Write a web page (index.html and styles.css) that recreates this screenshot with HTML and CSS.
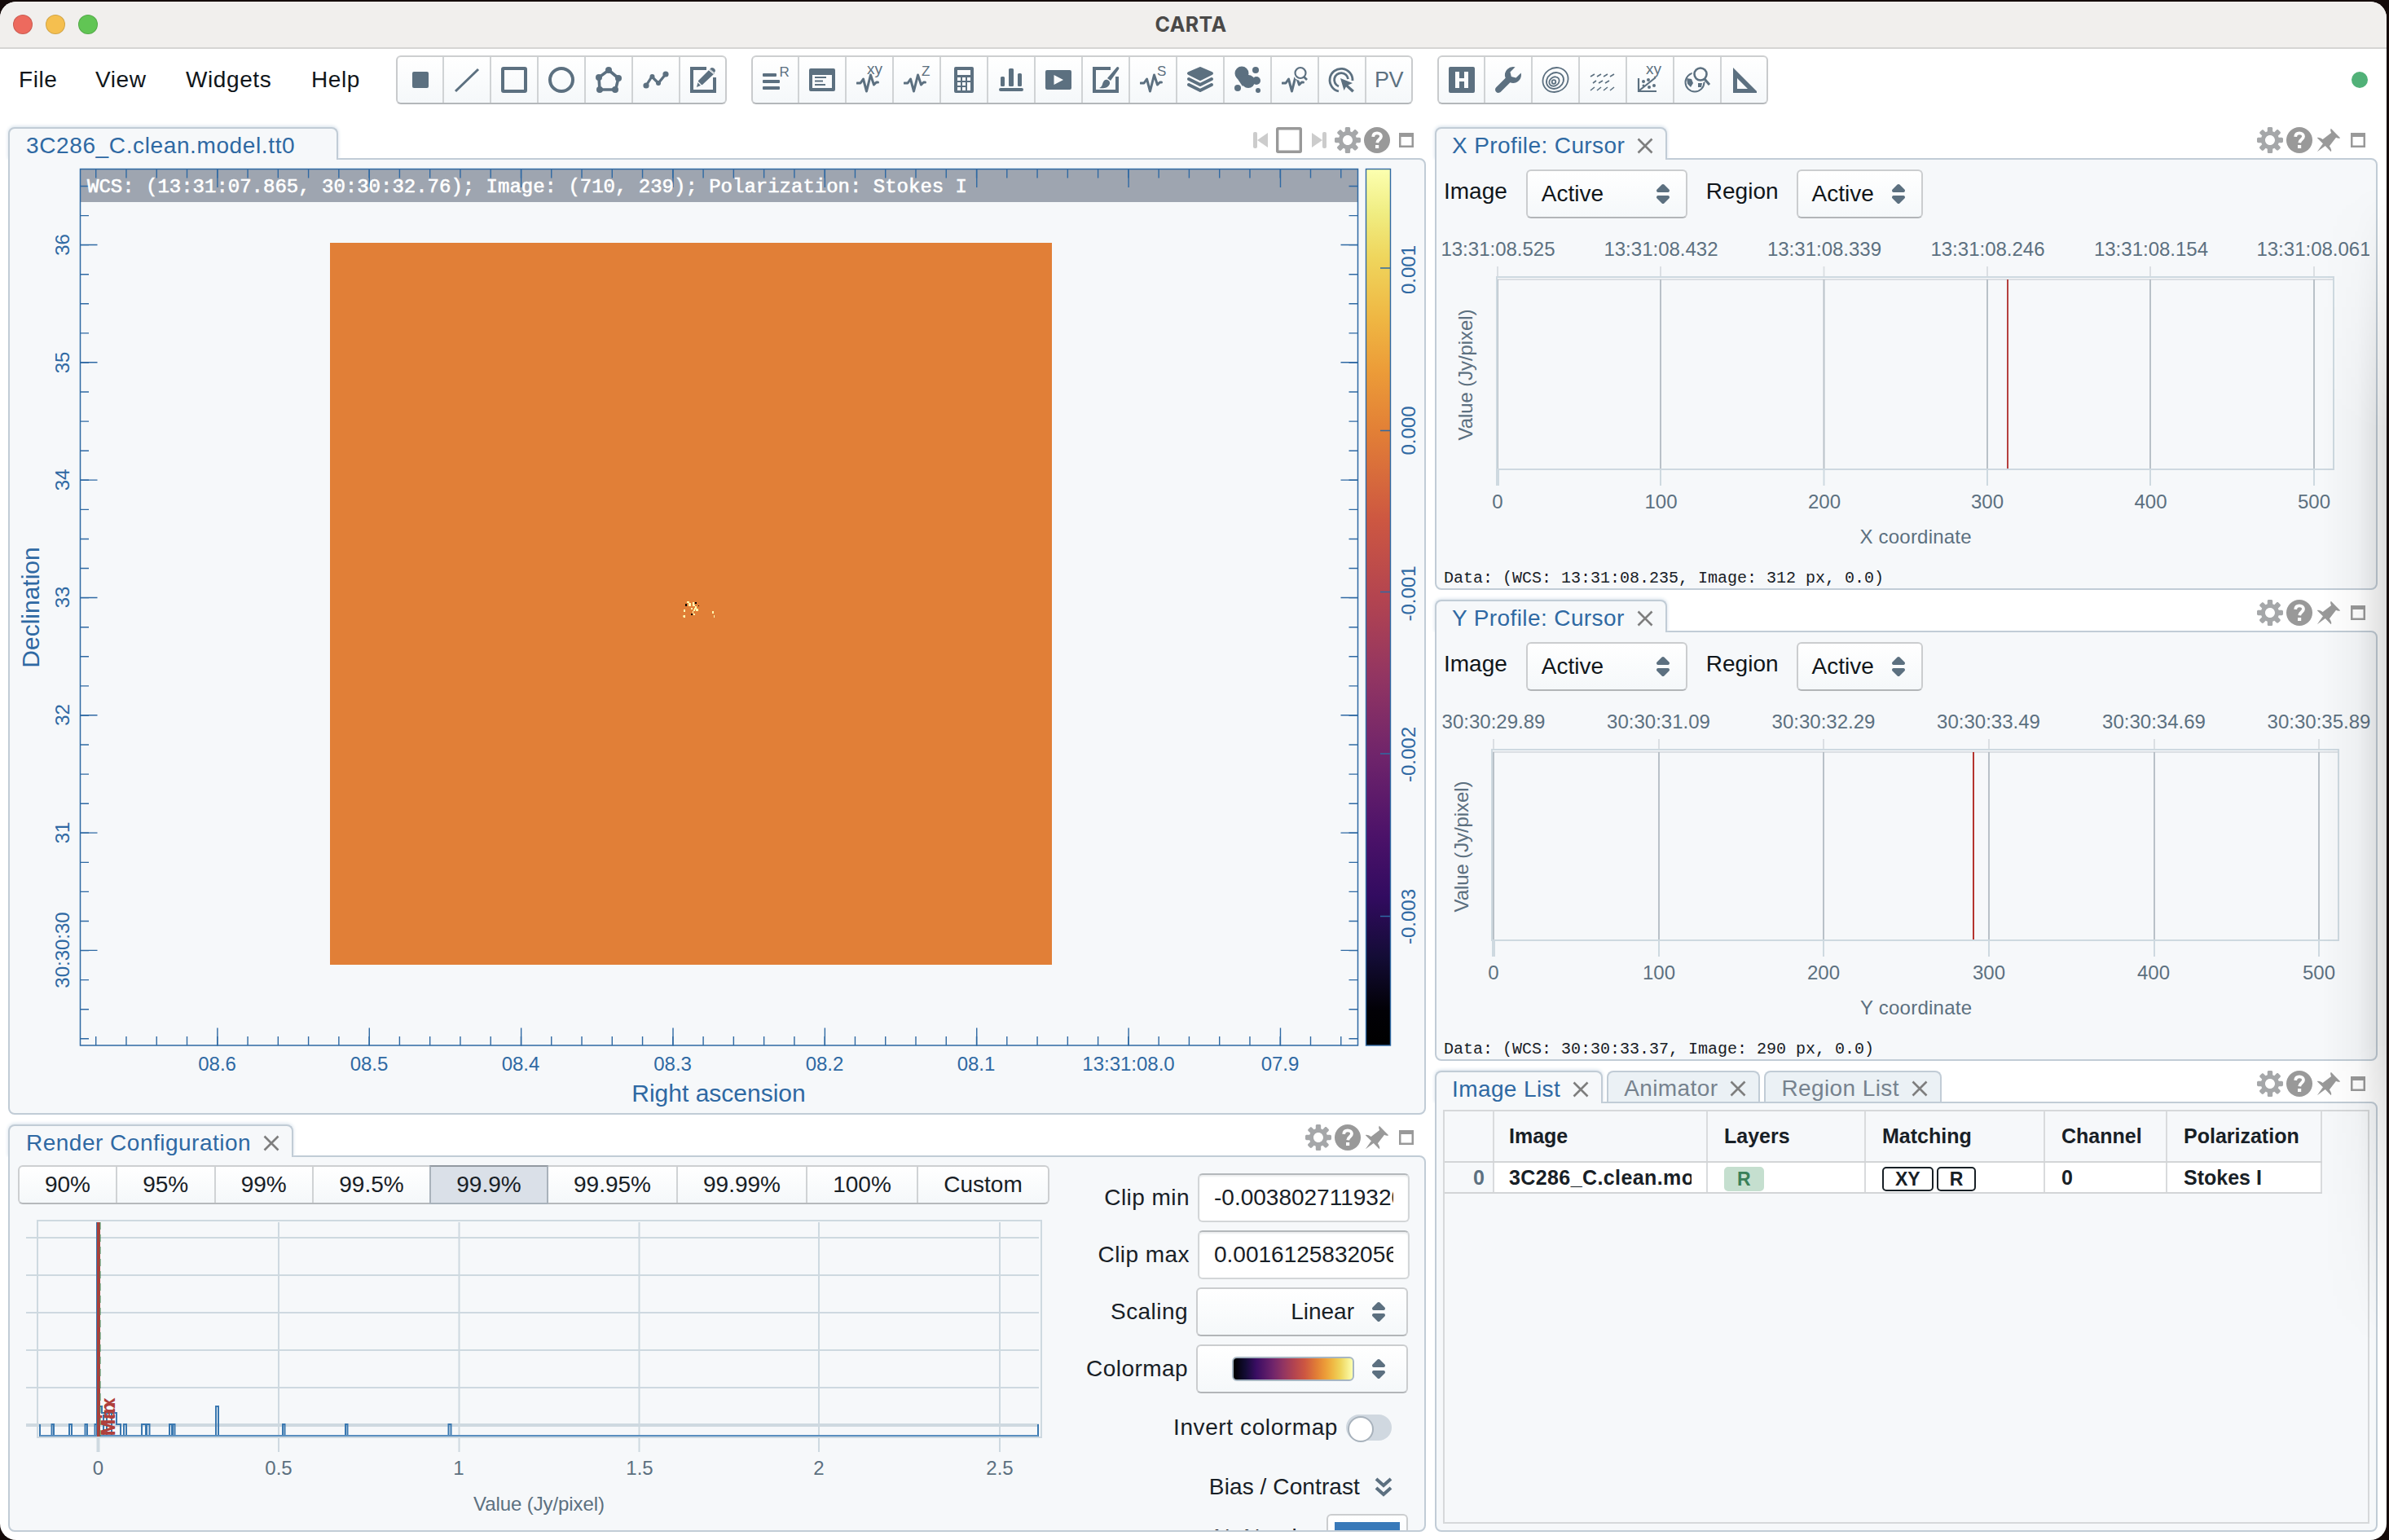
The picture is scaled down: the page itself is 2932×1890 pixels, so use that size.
FILE: index.html
```html
<!DOCTYPE html>
<html lang="en">
<head>
<meta charset="utf-8">
<title>CARTA</title>
<link rel="stylesheet" href="styles.css">
</head>
<body>
<svg class="defs" aria-hidden="true">
  <symbol id="cog" viewBox="0 0 16 16"><path d="M15.19 6.39h-1.85c-.11-.37-.27-.71-.45-1.04l1.36-1.36c.31-.31.31-.82 0-1.13l-1.13-1.13c-.31-.31-.82-.31-1.13 0l-1.36 1.36c-.33-.17-.67-.33-1.04-.44V.79c0-.44-.36-.8-.8-.8h-1.6c-.44 0-.8.36-.8.8v1.86c-.39.12-.75.28-1.1.47l-1.3-1.3c-.3-.3-.79-.3-1.09 0L1.82 2.91c-.3.3-.3.79 0 1.09l1.3 1.3c-.2.34-.36.7-.48 1.09H.79c-.44 0-.8.36-.8.8v1.6c0 .44.36.8.8.8h1.85c.11.37.27.71.45 1.04l-1.36 1.36c-.31.31-.31.82 0 1.13l1.13 1.13c.31.31.82.31 1.13 0l1.36-1.36c.33.18.67.33 1.04.44v1.86c0 .44.36.8.8.8h1.6c.44 0 .8-.36.8-.8v-1.86c.39-.12.75-.28 1.1-.47l1.3 1.3c.3.3.79.3 1.09 0l1.09-1.09c.3-.3.3-.79 0-1.09l-1.3-1.3c.19-.35.36-.71.48-1.1h1.85c.44 0 .8-.36.8-.8v-1.6a.816.816 0 00-.81-.79zm-7.2 4.6c-1.66 0-3-1.34-3-3s1.34-3 3-3 3 1.34 3 3-1.34 3-3 3z"/></symbol>
  <symbol id="help" viewBox="0 0 16 16"><circle cx="8" cy="8" r="8"/><path d="M5.6 5.9C5.7 4.3 6.8 3.7 8 3.7c1.400 0 2.500.8 2.500 2.100C10.500 7.500 8.300 7.500 8.100 9.600" fill="none" stroke="#fff" stroke-width="1.900"/><rect x="7" y="11" width="2.100" height="2" fill="#fff"/></symbol>
  <symbol id="pin" viewBox="0 0 16 16"><path d="M9.410.92c-.51.51-.41 1.500.15 2.560L4.340 7.540C2.800 6.480 1.450 6.050.92 6.580l3.540 3.540-3.540 4.950 4.950-3.540 3.540 3.540c.53-.53.1-1.880-.96-3.420l4.060-5.220c1.060.56 2.040.66 2.550.15L9.410.92z"/></symbol>
  <symbol id="max" viewBox="0 0 18 18"><path d="M0 0h18v18H0zM2.500 5v10.500h13V5z" fill-rule="evenodd"/></symbol>
  <symbol id="caret" viewBox="0 0 16 16"><path d="M5 7h6a1.003 1.003 0 00.71-1.710l-3-3C8.530 2.110 8.280 2 8 2s-.53.11-.71.29l-3 3A1.003 1.003 0 005 7zm6 2H5a1.003 1.003 0 00-.71 1.710l3 3c.18.18.43.29.71.29s.53-.11.71-.29l3-3A1.003 1.003 0 0011 9z"/></symbol>
  <symbol id="close" viewBox="0 0 20 20"><path d="M1.500 1.500l17 17M18.500 1.500l-17 17" stroke="currentColor" stroke-width="2.600" fill="none"/></symbol>
  <symbol id="pulse" viewBox="0 0 32 32"><path d="M1 20h4l3.500-5 4 15 5-20 4 12 3-3h2" fill="none" stroke="currentColor" stroke-width="3" stroke-linejoin="round" stroke-linecap="round"/></symbol>
  <linearGradient id="inferno" x1="0" y1="1" x2="0" y2="0">
    <stop offset="0" stop-color="#000000"/><stop offset=".04" stop-color="#020106"/><stop offset=".1" stop-color="#130c35"/><stop offset=".17" stop-color="#320b60"/><stop offset=".24" stop-color="#4c1269"/><stop offset=".33" stop-color="#6f246b"/><stop offset=".42" stop-color="#923562"/><stop offset=".51" stop-color="#b34450"/><stop offset=".6" stop-color="#cd5741"/><stop offset=".7" stop-color="#e27f36"/><stop offset=".77" stop-color="#ec9c38"/><stop offset=".83" stop-color="#efb743"/><stop offset=".9" stop-color="#efd65d"/><stop offset=".95" stop-color="#f0ed82"/><stop offset="1" stop-color="#fcffb0"/>
  </linearGradient>
</svg>
<div class="window">
  <header class="titlebar">
    <div class="lights"><i class="red"></i><i class="yellow"></i><i class="green"></i></div>
    <div class="title">CARTA</div>
  </header>
  <nav class="toolbar">
    <ul class="menu"><li class="m-file">File</li><li class="m-view">View</li><li class="m-widgets">Widgets</li><li>Help</li></ul>
    <div class="group">
      <button><svg class="ico" viewBox="0 0 32 32"><rect x="6" y="6" width="20" height="20" rx="2"/></svg></button>
      <button><svg class="ico" viewBox="0 0 32 32"><path class="ln" d="M2 30L30 3" stroke-width="3"/></svg></button>
      <button><svg class="ico" viewBox="0 0 32 32"><rect class="ln" x="2" y="2" width="28" height="28" rx="1" stroke-width="4"/></svg></button>
      <button><svg class="ico" viewBox="0 0 32 32"><circle class="ln" cx="16" cy="16" r="14" stroke-width="4"/></svg></button>
      <button><svg class="ico" viewBox="0 0 32 32"><path class="ln" d="M16 4L28 14 24.500 28H5L4 13z" stroke-width="3.600"/><circle cx="16" cy="4" r="4"/><circle cx="28" cy="14" r="4"/><circle cx="24" cy="28" r="4"/><circle cx="5" cy="28" r="4"/><circle cx="4" cy="13" r="4"/></svg></button>
      <button><svg class="ico" viewBox="0 0 32 32"><path class="ln" d="M4 23L11 12 19 20 28 9" stroke-width="3.200"/><circle cx="4" cy="23" r="3.600"/><circle cx="11.500" cy="12" r="3"/><circle cx="19" cy="20" r="3"/><circle cx="28" cy="9" r="3.600"/></svg></button>
      <button><svg class="ico" viewBox="0 0 32 32"><path class="ln" d="M20 2H2V30H30V13" stroke-width="4"/><path d="M8 25l2-8L24 3l6 5L15 22zM25.500 1.500c2-2 7 2 5 4.500l-.8 1-5.400-4.500z"/><path d="M9 18l5 5M23 3.500l6 5" stroke="#fafbfc" stroke-width="1.400"/></svg></button>
    </div>
    <div class="group">
      <button><svg class="ico" viewBox="0 0 32 32"><rect x="0" y="8" width="17" height="4" rx="1"/><rect x="0" y="16" width="21" height="4" rx="1"/><rect x="0" y="24" width="21" height="4" rx="1"/><text x="20.500" y="12" font-size="17">R</text></svg></button>
      <button><svg class="ico" viewBox="0 0 32 32"><path d="M2 2h28a2 2 0 012 2v24a2 2 0 01-2 2H2a2 2 0 01-2-2V4a2 2 0 012-2zM4 10v16h24V10z" fill-rule="evenodd"/><path class="ln" d="M7 13h14M7 17.500h10M7 22h13" stroke-width="2.200"/></svg></button>
      <button><svg class="ico" viewBox="0 0 32 32"><use href="#pulse"/><text x="13" y="9" font-size="19" textLength="19">xy</text></svg></button>
      <button><svg class="ico" viewBox="0 0 32 32"><use href="#pulse"/><text x="22" y="11" font-size="17">Z</text></svg></button>
      <button><svg class="ico" viewBox="0 0 32 32"><path d="M6 0h20a2 2 0 012 2v28a2 2 0 01-2 2H6a2 2 0 01-2-2V2a2 2 0 012-2zM8 4v6h16V4zM8 13v4h4v-4zM14 13v4h4v-4zM20 13v4h4v-4zM8 19v4h4v-4zM14 19v4h4v-4zM8 25v4h4v-4zM14 25v4h4v-4zM20 19v10h4V19z" fill-rule="evenodd"/></svg></button>
      <button><svg class="ico" viewBox="0 0 32 32"><rect x="1" y="26" width="30" height="4" rx="2"/><rect x="3" y="12" width="5" height="12" rx="1.500"/><rect x="13" y="2" width="6" height="22" rx="1.500"/><rect x="24" y="8" width="5" height="16" rx="1.500"/></svg></button>
      <button><svg class="ico" viewBox="0 0 32 32"><path d="M2 4h28a2 2 0 012 2v20a2 2 0 01-2 2H2a2 2 0 01-2-2V6a2 2 0 012-2zM10.500 10v12L22 16z" fill-rule="evenodd"/></svg></button>
      <button><svg class="ico" viewBox="0 0 32 32"><path class="ln" d="M22 2H2V30H30V12" stroke-width="4"/><path d="M8 26c5-2 3-5 6-9 3-3 8 0 7 4-2 5-8 6-13 5zM18 14L30 0c2 0 3 1 2 3L22 17z"/></svg></button>
      <button><svg class="ico" viewBox="0 0 32 32"><use href="#pulse"/><text x="21" y="11" font-size="17">S</text></svg></button>
      <button><svg class="ico" viewBox="0 0 16 16"><path d="M.55 4.890l7 3.500c.14.07.29.11.45.11s.31-.04.45-.11l7-3.500a.998.998 0 00-.06-1.810L8.400.08a1.006 1.006 0 00-.79 0l-6.990 3a.992.992 0 00-.07 1.810zM15 10c-.16 0-.31.04-.45.11L8 13.380 1.450 10.100c-.14-.06-.29-.1-.45-.1-.55 0-1 .45-1 1 0 .39.23.73.55.89l7 3.500c.14.07.29.11.45.11s.31-.04.45-.11l7-3.500c.32-.16.55-.5.55-.89 0-.55-.45-1-1-1zm0-3.500c-.16 0-.31.04-.45.11L8 9.880 1.450 6.610A.997.997 0 001 6.500c-.55 0-1 .45-1 1 0 .39.23.73.55.89l7 3.500c.14.07.29.11.45.11s.31-.04.45-.11l7-3.500c.32-.16.55-.5.55-.89 0-.55-.45-1-1-1z"/></svg></button>
      <button><svg class="ico" viewBox="0 0 32 32"><circle cx="9" cy="8" r="8.500"/><circle cx="17" cy="18" r="8"/><circle cx="26" cy="4" r="4"/><circle cx="27" cy="17" r="5"/><circle cx="4" cy="26" r="4"/><circle cx="29" cy="29" r="3"/><path d="M2 12l8 12 8-14z"/></svg></button>
      <button><svg class="ico" viewBox="0 0 32 32"><use href="#pulse"/><circle cx="23" cy="8" r="9" fill="#fcfcfd"/><circle class="ln" cx="23" cy="7.500" r="6.500" stroke-width="2.200"/><path class="ln" d="M27 12l4 4" stroke-width="2.600"/></svg></button>
      <button><svg class="ico" viewBox="0 0 32 32"><path class="ln" d="M12 30A14 14 0 1129 17" stroke-width="2.800"/><path class="ln" d="M12 24A8.500 8.500 0 1123.500 15" stroke-width="2.800"/><path d="M14 14l15 6-5.500 2.500L31 29l-2.500 2.500L21 24.500 18.500 29z"/></svg></button>
      <button class="pv">PV</button>
    </div>
    <div class="group">
      <button><svg class="ico" viewBox="0 0 32 32"><path d="M2 0h28a2 2 0 012 2v28a2 2 0 01-2 2H2a2 2 0 01-2-2V2a2 2 0 012-2zM8 6v20h5v-8h6v8h5V6h-5v8h-6V6z" fill-rule="evenodd"/></svg></button>
      <button><svg class="ico" viewBox="0 0 16 16"><path d="M15.830 3.700l-3.060 3.050-2.840-.7-.7-2.830L12.290.17a5.004 5.004 0 00-4.830 1.290 4.967 4.967 0 00-1.120 5.360L.58 12.580c-.36.36-.58.86-.58 1.410 0 1.100.9 2 2 2 .55 0 1.050-.22 1.410-.59l5.770-5.770c1.790.69 3.910.35 5.350-1.120 1.320-1.300 1.740-3.150 1.300-4.810z"/></svg></button>
      <button><svg class="ico" viewBox="0 0 32 32"><g class="ln" stroke-width="1.800"><ellipse cx="16" cy="16" rx="16" ry="14.500" transform="rotate(-35 16 16)"/><ellipse cx="15.500" cy="17" rx="11" ry="9.500" transform="rotate(-35 15.500 17)"/><ellipse cx="14.500" cy="18" rx="6.500" ry="5.300" transform="rotate(-35 14.500 18)"/><circle cx="14" cy="18.500" r="2.300"/></g></svg></button>
      <button><svg class="ico" viewBox="0 0 32 32"><path class="ln" d="M1 12l5-3M9 12l5-3M17 12l5-3M25 12l5-3M4 20l4-3M11 20l5-3M19 20l5-3M1 29l5-4M9 29l5-4M17 29l5-4M25 29l5-4" stroke-width="1.600"/></svg></button>
      <button><svg class="ico" viewBox="0 0 32 32"><path class="ln" d="M2 14v16h22M3 29l20-16" stroke-width="2.200"/><circle cx="8" cy="18" r="2"/><circle cx="14" cy="16" r="2"/><circle cx="15" cy="25" r="2"/><circle cx="21" cy="23" r="2"/><circle cx="8" cy="23" r="1.500"/><text x="11" y="9" font-size="19" textLength="19">xy</text></svg></button>
      <button><svg class="ico" viewBox="0 0 32 32"><circle class="ln" cx="13" cy="19" r="11.500" stroke-width="2"/><path d="M3 14l6 1 2 5-3 5-4-4zM17 20l5 0-1 5-4 0z"/><circle cx="20" cy="9" r="10.500" fill="#fbfcfc"/><circle class="ln" cx="20" cy="9" r="7.500" stroke-width="2.600"/><path class="ln" d="M25 15l6 7" stroke-width="3"/></svg></button>
      <button><svg class="ico" viewBox="0 0 32 32"><path d="M2 1L31 30v2H2zM7 14v13h13z" fill-rule="evenodd"/></svg></button>
    </div>
    <span class="status"></span>
  </nav>

  <main class="columns">
    <div class="col left">
      <section class="panel p-image">
        <div class="head">
          <div class="tab active wide">3C286_C.clean.model.tt0</div>
          <div class="tools">
            <svg class="step" viewBox="0 0 18 20"><rect width="5" height="20" rx="2"/><path d="M18 1v18L5 10z"/></svg>
            <svg class="frame" viewBox="0 0 32 32"><rect x="1.700" y="1.700" width="28.600" height="28.600" rx="1"/></svg>
            <svg class="step next" viewBox="0 0 18 20"><rect x="13" width="5" height="20" rx="2"/><path d="M0 1v18l13-9z"/></svg>
            <svg class="t cog"><use href="#cog"/></svg><svg class="t"><use href="#help"/></svg><svg class="mx"><use href="#max"/></svg>
          </div>
        </div>
        <div class="body">
          <svg class="chart" width="1736" height="1170" viewBox="12 196 1736 1170">
            <rect x="405" y="298" width="886" height="886" fill="#e17f37"/>
            <path fill="#fffbb0" d="M843 738h3v2h-3zM845 740h3v4h-3zM850 739h2v3h1v2h-3zM839 748h2v3h-2zM848 746h2v2h-2zM853 744h2v3h2v3h-3v-2h-2v-2h1zM851 748h2v2h-2zM850 750h1v3h-1zM851 753h2v2h-2zM839 755h2v3h-2l-1-2zM874 750h2v3h-2zM876 755h1v3h-1z"/>
            <path fill="#000" d="M841 741h2v3h-2zM853 739h2v2h-2zM857 743h1v1h-1zM848 753h2v2h-2z"/>
            <rect x="98" y="208" width="1568" height="40" fill="#9ea5b0"/>
            <g class="axis">
              <rect x="98.500" y="207.500" width="1568" height="1075.500"/>
              <path d="M117 213H1666M117 1277.500H1666" stroke-width="11" stroke-dasharray="1.400 35.870"/>
              <path d="M266.200 219H1666M266.200 1272.500H1666" stroke-width="22" stroke-dasharray="1.400 184.970"/>
              <path d="M103.500 227.800V1283M1661 227.800V1283" stroke-width="11" stroke-dasharray="1.400 34.680"/>
              <path d="M109 299.800V1283M1656 299.800V1283" stroke-width="21" stroke-dasharray="1.400 142.920"/>
            </g>
            <text class="wcs" x="107" y="236" textLength="1080">WCS: (13:31:07.865, 30:30:32.76); Image: (710, 239); Polarization: Stokes I</text>
            <rect x="1676.500" y="207.500" width="30" height="1075.500" fill="url(#inferno)" stroke="#2f69a3" stroke-width="1.400"/>
            <path d="M1694 329h13M1694 528.500h13M1694 726.500h13M1694 925h13M1694 1124.500h13" stroke="#2f69a3" stroke-width="1.300"/>
            <g class="lab blue">
              <text x="266.600" y="1314">08.6</text><text x="453" y="1314">08.5</text><text x="639" y="1314">08.4</text><text x="825.600" y="1314">08.3</text><text x="1012" y="1314">08.2</text><text x="1198" y="1314">08.1</text><text x="1385" y="1314">13:31:08.0</text><text x="1571" y="1314">07.9</text>
              <text transform="translate(84.500 300.500) rotate(-90)">36</text><text transform="translate(84.500 445) rotate(-90)">35</text><text transform="translate(84.500 589) rotate(-90)">34</text><text transform="translate(84.500 733) rotate(-90)">33</text><text transform="translate(84.500 877.500) rotate(-90)">32</text><text transform="translate(84.500 1022) rotate(-90)">31</text><text transform="translate(84.500 1166) rotate(-90)">30:30:30</text>
              <text transform="translate(1736.500 331) rotate(-90)">0.001</text><text transform="translate(1736.500 528.500) rotate(-90)">0.000</text><text transform="translate(1736.500 728.500) rotate(-90)">-0.001</text><text transform="translate(1736.500 926) rotate(-90)">-0.002</text><text transform="translate(1736.500 1125) rotate(-90)">-0.003</text>
              <text class="big" x="882" y="1352">Right ascension</text>
              <text class="big" transform="translate(48 745.500) rotate(-90)">Declination</text>
            </g>
          </svg>
        </div>
      </section>

      <section class="panel p-render">
        <div class="head">
          <div class="tab active">Render Configuration<svg class="x"><use href="#close"/></svg></div>
          <div class="tools"><svg class="t cog"><use href="#cog"/></svg><svg class="t"><use href="#help"/></svg><svg class="t"><use href="#pin"/></svg><svg class="mx"><use href="#max"/></svg></div>
        </div>
        <div class="body render">
          <div class="hist">
            <div class="pct"><b class="w119">90%</b><b class="w121">95%</b><b class="w121">99%</b><b class="w144">99.5%</b><b class="w144 on">99.9%</b><b class="w159">99.95%</b><b class="w159">99.99%</b><b class="w136">100%</b><b class="w161">Custom</b></div>
            <svg class="chart" width="1290" height="400" viewBox="12 1478 1290 400">
              <g fill="none" stroke="#ced9e0" stroke-width="2">
                <path d="M46 1498H1278V1764H46zM32 1519H1275M32 1565H1275M32 1611H1275M32 1657H1275M32 1703H1275"/>
                <path d="M342 1500V1782M563.500 1500V1782M784.500 1500V1782M1005 1500V1782M1227 1500V1782"/>
                <path d="M32 1749H1275M120.500 1764V1782" stroke-width="4"/>
              </g>
              <path fill="none" stroke="#3a78b0" stroke-width="2" d="M49 1748V1762H63.500V1748H66V1762H85V1748H88V1762H104.500V1748H107V1762H116.500V1748H119V1500V1762M122 1762V1726H125V1734H143V1748H148V1762H152V1748H155V1762H174V1748H179V1762H180V1748H183.500V1762H208V1748H211V1762H212V1748H214.500V1762H265V1726H268V1762H347V1748H349.500V1762H424V1748H426.500V1762H550.500V1748H553.500V1762H1274V1748M127 1762V1736M131 1734V1762M137 1762V1734"/>
              <path d="M49 1762H1274" stroke="#5a8fbf" stroke-width="2" fill="none"/>
              <path d="M121 1500V1763" stroke="#a9403a" stroke-width="4"/>
              <path d="M123 1500V1763" stroke="#3d8a55" stroke-width="1" stroke-dasharray="9 6"/>
              <g class="mark"><text transform="translate(141 1762) rotate(-90)">Min</text><text transform="translate(141 1762) rotate(-90)">Max</text></g>
              <g class="lab">
                <text x="120.500" y="1809.500">0</text><text x="342" y="1809.500">0.5</text><text x="563" y="1809.500">1</text><text x="785" y="1809.500">1.5</text><text x="1005" y="1809.500">2</text><text x="1227" y="1809.500">2.5</text>
                <text x="661.500" y="1853.500" textLength="161">Value (Jy/pixel)</text>
              </g>
            </svg>
          </div>
          <div class="controls">
            <div class="row"><label>Clip min</label><div class="input"><span>-0.003802711932003</span></div></div>
            <div class="row"><label>Clip max</label><div class="input"><span>0.001612583205600</span></div></div>
            <div class="row sel"><label>Scaling</label><div class="select wide">Linear<svg><use href="#caret"/></svg></div></div>
            <div class="row sel"><label>Colormap</label><div class="select wide"><i class="ramp"></i><svg><use href="#caret"/></svg></div></div>
            <div class="row invert"><label>Invert colormap</label><span class="switch"></span></div>
            <div class="row bias"><label>Bias / Contrast</label><svg viewBox="0 0 22 24"><path d="M2 2l9 8 9-8M2 13l9 8 9-8" fill="none" stroke="#5c7080" stroke-width="4"/></svg></div>
            <div class="row sel nan"><label>NaN color</label><div class="select swatch"><i></i></div></div>
          </div>
        </div>
      </section>
    </div>

    <div class="col right">
      <section class="panel p-x">
        <div class="head">
          <div class="tab active">X Profile: Cursor<svg class="x"><use href="#close"/></svg></div>
          <div class="tools"><svg class="t cog"><use href="#cog"/></svg><svg class="t"><use href="#help"/></svg><svg class="t"><use href="#pin"/></svg><svg class="mx"><use href="#max"/></svg></div>
        </div>
        <div class="body">
          <div class="pick"><label>Image</label><div class="select s1">Active<svg><use href="#caret"/></svg></div><label>Region</label><div class="select s2">Active<svg><use href="#caret"/></svg></div></div>
          <svg class="chart" width="1145" height="454" viewBox="1763 268 1145 454">
            <path d="M1838 327V340M2038 327V340M2238.500 327V340M2439 327V340M2639 327V340M2840 327V340M1837 343H2864" stroke="#dbdfe3" stroke-width="2"/>
            <path d="M1838 343V575M2038 343V575M2238.500 343V575M2439 343V575M2639 343V575M2840 343V575" stroke="#b9c1c8" stroke-width="2"/>
            <path d="M1837 340H2864V576H1837zM2038 577V596M2238.500 577V596M2439 577V596M2639 577V596M2840 577V596" stroke="#ced9e0" stroke-width="2" fill="none"/>
            <path d="M1838 576V596" stroke="#ced9e0" stroke-width="4"/>
            <path d="M2464 343V575" stroke="#b5403f" stroke-width="2"/>
            <g class="lab">
              <text x="1838.500" y="314">13:31:08.525</text><text x="2038.500" y="314">13:31:08.432</text><text x="2239" y="314">13:31:08.339</text><text x="2439.500" y="314">13:31:08.246</text><text x="2640" y="314">13:31:08.154</text><text x="2839.500" y="314">13:31:08.061</text>
              <text x="1838" y="624">0</text><text x="2038.500" y="624">100</text><text x="2239" y="624">200</text><text x="2439" y="624">300</text><text x="2639.500" y="624">400</text><text x="2840" y="624">500</text>
              <text x="2351" y="667" textLength="137">X coordinate</text>
              <text transform="translate(1807 460) rotate(-90)" textLength="161">Value (Jy/pixel)</text>
            </g>
            <text class="data" x="1772" y="715" textLength="540">Data: (WCS: 13:31:08.235, Image: 312 px, 0.0)</text>
          </svg>
        </div>
      </section>

      <section class="panel p-y">
        <div class="head">
          <div class="tab active">Y Profile: Cursor<svg class="x"><use href="#close"/></svg></div>
          <div class="tools"><svg class="t cog"><use href="#cog"/></svg><svg class="t"><use href="#help"/></svg><svg class="t"><use href="#pin"/></svg><svg class="mx"><use href="#max"/></svg></div>
        </div>
        <div class="body">
          <div class="pick"><label>Image</label><div class="select s1">Active<svg><use href="#caret"/></svg></div><label>Region</label><div class="select s2">Active<svg><use href="#caret"/></svg></div></div>
          <svg class="chart" width="1147" height="452" viewBox="1763 848 1147 452">
            <path d="M1833 907V920M2036 907V920M2238 907V920M2441 907V920M2644 907V920M2846 907V920M1831 923H2871" stroke="#dbdfe3" stroke-width="2"/>
            <path d="M1833 923V1153M2036 923V1153M2238 923V1153M2441 923V1153M2644 923V1153M2846 923V1153" stroke="#b9c1c8" stroke-width="2"/>
            <path d="M1831 920H2870V1154H1831zM2036 1155V1174M2238 1155V1174M2441 1155V1174M2644 1155V1174M2846 1155V1174" stroke="#ced9e0" stroke-width="2" fill="none"/>
            <path d="M1833 1154V1174" stroke="#ced9e0" stroke-width="4"/>
            <path d="M2422 923V1153" stroke="#b5352f" stroke-width="2"/>
            <g class="lab">
              <text x="1833" y="894">30:30:29.89</text><text x="2035.500" y="894">30:30:31.09</text><text x="2238" y="894">30:30:32.29</text><text x="2440.500" y="894">30:30:33.49</text><text x="2643.500" y="894">30:30:34.69</text><text x="2846" y="894">30:30:35.89</text>
              <text x="1833" y="1202">0</text><text x="2036" y="1202">100</text><text x="2238" y="1202">200</text><text x="2441" y="1202">300</text><text x="2643" y="1202">400</text><text x="2846" y="1202">500</text>
              <text x="2351.500" y="1245" textLength="137">Y coordinate</text>
              <text transform="translate(1802 1039) rotate(-90)" textLength="161">Value (Jy/pixel)</text>
            </g>
            <text class="data" x="1772" y="1293" textLength="528">Data: (WCS: 30:30:33.37, Image: 290 px, 0.0)</text>
          </svg>
        </div>
      </section>

      <section class="panel p-list">
        <div class="head">
          <div class="tab active">Image List<svg class="x"><use href="#close"/></svg></div>
          <div class="tab">Animator<svg class="x"><use href="#close"/></svg></div>
          <div class="tab">Region List<svg class="x"><use href="#close"/></svg></div>
          <div class="tools"><svg class="t cog"><use href="#cog"/></svg><svg class="t"><use href="#help"/></svg><svg class="t"><use href="#pin"/></svg><svg class="mx"><use href="#max"/></svg></div>
        </div>
        <div class="body listbody">
          <div class="grid">
            <div class="tr th"><span></span><span>Image</span><span>Layers</span><span>Matching</span><span>Channel</span><span>Polarization</span></div>
            <div class="tr td"><span class="idx">0</span><span><em>3C286_C.clean.model.tt0</em></span><span><i class="tag g">R</i></span><span><i class="tag">XY</i><i class="tag">R</i></span><span>0</span><span>Stokes I</span></div>
          </div>
        </div>
      </section>
    </div>
  </main>
  <div class="edge"></div>
</div>
</body>
</html>
```
FILE: styles.css
```css
* { box-sizing: border-box; }
body { margin: 0; width: 2932px; height: 1890px; overflow: hidden; padding-top: 2px; background: #150b0a; font-family: "Liberation Sans", Arial, sans-serif; font-size: 28px; color: #182026; }
.defs { position: absolute; width: 0; height: 0; }
.window { position: relative; width: 2929px; height: 1888px; background: #fff; border-radius: 20px; overflow: hidden; }
svg { display: block; fill: currentColor; flex: none; }

.titlebar { height: 58px; background: #f1efed; border-bottom: 2px solid #d6d5d3; display: grid; grid-template-columns: 200px 1fr 206px; align-items: center; }
.lights { display: flex; gap: 16px; padding-left: 16px; }
.lights i { width: 24px; height: 24px; border-radius: 50%; border: 1px solid rgba(0,0,0,.14); }
.red { background: #ed6a5e; }
.yellow { background: #f5bf4f; }
.green { background: #61c554; }
.title { text-align: center; font: 700 25px/53px Inter, sans-serif; letter-spacing: .4px; color: #4a4948; }

.toolbar { height: 96px; padding-top: 8px; display: flex; align-items: flex-start; position: relative; }
.menu { list-style: none; margin: 0; padding: 0 0 0 23px; width: 486px; display: flex; line-height: 60px; letter-spacing: .6px; color: #10161a; }
.m-file { width: 94px; } .m-view { width: 111px; } .m-widgets { width: 154px; }
.group { display: flex; margin-right: 30px; height: 60px; border-radius: 6px; border: 2px solid #c9cbcd; border-bottom-color: #b4b7ba; border-top-color: #cdcfd0; background: linear-gradient(#fff, #f5f8fa); }
.group button { appearance: none; border: 0; border-right: 2px solid #d0d3d5; background: none; width: 58px; padding: 0; display: grid; place-items: center; color: #5c7080; font: 28px "Liberation Sans", sans-serif; }
.group button:first-child { width: 57px; }
.group button:last-child { border: 0; width: 55px; }
.ico { width: 32px; height: 32px; overflow: visible; font-family: "Liberation Sans", sans-serif; }
.ln { fill: none; stroke: currentColor; }
.group .pv { font-size: 27px; letter-spacing: -.5px; }
.status { width: 20px; height: 20px; border-radius: 50%; background: #51b178; margin: 20px 23px 0 auto; }

.columns { display: flex; gap: 11px; padding-left: 10px; }
.col { display: flex; flex-direction: column; gap: 12px; }
.left { width: 1740px; }
.right { width: 1157px; }
.panel { display: flex; flex-direction: column; }
.p-image { height: 1212px; } .p-render { height: 500px; }
.p-x { height: 568px; } .p-y { height: 566px; } .p-list { height: 566px; }
.head { height: 38px; display: flex; gap: 5px; }
.tab { height: 38px; border: 2px solid #c1ccd6; border-bottom: 0; border-radius: 8px 8px 0 0; background: #ebf1f5; color: #76828e; padding: 3px 15px 0 19px; display: flex; align-items: center; line-height: 34px; letter-spacing: .4px; white-space: nowrap; }
.tab.active { height: 40px; background: #f6f8fa; color: #2f69a3; position: relative; box-shadow: 0 -1px 4px #d5e0ea; clip-path: inset(-6px -6px 0 -6px); }
.tab.wide { width: 405px; letter-spacing: .62px; padding-left: 20px; }
.p-render .tab { padding-left: 20px; letter-spacing: .5px; }
.x { width: 20px; height: 20px; margin-left: 15px; color: #7e7e7e; }
.tools { margin-left: auto; margin-right: 15px; display: flex; gap: 4px; height: 32px; align-items: center; color: #999; }
.t { width: 32px; height: 32px; }
.cog { color: #a5a7a9; }
.mx { width: 18px; height: 18px; margin-left: 7px; }
.step { width: 18px; height: 20px; color: #ccc; margin-right: 6px; }
.next { margin: 0 6px 0 8px; }
.frame { width: 32px; height: 32px; }
.frame rect { fill: #fff; stroke: #999; stroke-width: 3.400; }
.body { flex: 1; min-height: 0; border: 2px solid #c1ccd6; border-radius: 0 8px 8px 8px; background: #f6f8fa; overflow: hidden; }

.chart { font-family: "Liberation Sans", sans-serif; }
.lab { fill: #5c7080; font-size: 24px; text-anchor: middle; }
.lab.blue { fill: #2f69a3; }
.lab .big { font-size: 30px; }
.axis { fill: none; stroke: #2f69a3; stroke-width: 1.500; }
.wcs { font: 24px "Liberation Mono", monospace; fill: #fff; stroke: #fff; stroke-width: .6px; }
.data { font: 20px "Liberation Mono", monospace; fill: #182026; }
.mark { fill: #b0403b; font-size: 24px; font-weight: bold; }

.render { display: flex; }
.hist { width: 1290px; padding-top: 10px; }
.pct { margin-left: 10px; width: 1266px; height: 48px; display: flex; border: 2px solid #cdcfd1; border-bottom-color: #b6b9bc; border-radius: 6px; background: linear-gradient(#fff, #f5f8fa); line-height: 43px; }
.pct b { font-weight: normal; text-align: center; border-right: 2px solid #d0d3d5; height: 44px; }
.w119 { width: 120px; } .w121 { width: 120.5px; } .w144 { width: 144px; } .w159 { width: 159px; } .w136 { width: 136px; }
.pct .w161 { flex: 1; border: 0; }
.pct .on { margin: -2px 0 -2px -2px; width: 146px; height: 48px; border: 2px solid #a9b2bb; border-top-color: #9299a1; background: #dae0e8; line-height: 43px; }
.controls { flex: 1; padding: 20px 18px 0 0; display: flex; flex-direction: column; gap: 10px; }
.controls label { letter-spacing: .45px; }
.row { height: 60px; display: flex; flex: none; justify-content: flex-end; align-items: center; gap: 10px; }
.row.sel { padding-right: 2px; }
.input { width: 260px; height: 60px; border: 2px solid #d3d6d8; border-top-color: #b4b8bb; border-radius: 6px; background: #fff; padding: 0 18px; line-height: 55px; box-shadow: inset 0 2px 2px #eceeef; }
.input span { display: block; overflow: hidden; white-space: nowrap; }
.select { height: 60px; border: 2px solid #cbcdcf; border-bottom-color: #b2b5b8; border-radius: 6px; background: linear-gradient(#fff, #f5f8fa); display: flex; align-items: center; justify-content: space-between; padding: 0 12px 0 17px; }
.select svg { width: 32px; height: 32px; color: #5c7080; }
.select.wide { width: 260px; justify-content: flex-end; gap: 14px; padding-right: 18px; }
.ramp { width: 150px; height: 30px; border: 2px solid #a7b6c2; border-radius: 6px; background: linear-gradient(90deg, #000, #130c35 10%, #3a0d63 19%, #6f246b 33%, #923562 42%, #b34450 51%, #cd5741 60%, #e27f36 70%, #ec9c38 77%, #efb743 83%, #efd65d 90%, #fcffb0); }
.invert { height: 64px; padding-right: 22px; }
.controls .invert label { letter-spacing: .6px; }
.switch { width: 56px; height: 32px; border-radius: 16px; background: #d0d8e0; padding: 2px; }
.switch::before { content: ""; display: block; width: 28px; height: 28px; border-radius: 50%; background: #fff; border: 2px solid #a8b2bc; }
.bias { height: 54px; padding-right: 21px; gap: 18px; padding-top: 8px; }
.controls .bias label { letter-spacing: .1px; }
.bias svg { width: 22px; height: 24px; }
.nan { align-items: flex-start; }
.nan label { padding-top: 13px; }
.select.swatch { width: 100px; padding: 8px; align-items: flex-start; }
.swatch i { width: 80px; height: 40px; background: #3879b9; }

.pick { height: 72px; padding: 12px 0 0 9px; display: flex; color: #10161a; line-height: 54px; }
.pick .select { line-height: 1; }
.s1 { width: 198px; margin: 0 23px 0 23px; }
.s2 { width: 155px; margin-left: 22px; padding-right: 12px; }

.listbody { padding: 8px; }
.grid { height: 508px; border: 2px solid #d6d8da; font-size: 25px; font-weight: bold; }
.tr { display: grid; grid-template-columns: 61px 262px 194px 220px 150px 190px; width: 1077px; border-bottom: 2px solid #d3d5d7; }
.tr > span { border-right: 2px solid #d9dbdd; padding-left: 20px; white-space: nowrap; overflow: hidden; }
.tr > span:nth-child(2) { padding-left: 18px; }
.th > span { line-height: 61px; height: 61px; }
.td > span { height: 36px; line-height: 36px; background: #fff; display: flex; gap: 4px; }
.td > .idx { background: #f6f8fa; justify-content: flex-end; padding-right: 10px; color: #5c7080; }
.td em { font-style: normal; width: 224px; overflow: hidden; letter-spacing: .4px; }
.tag { font-style: normal; font-size: 23px; height: 30px; line-height: 27px; margin-top: 5px; border: 2px solid #182026; border-radius: 5px; padding: 0 14px; }
.tag.g { background: #c5dfcf; border-color: #c5dfcf; color: #3a8059; }
.edge { position: absolute; top: 150px; right: 0; width: 80px; height: 1500px; background: linear-gradient(90deg, transparent, rgba(0,0,0,.03) 55%, rgba(0,0,0,.13)); -webkit-mask-image: linear-gradient(transparent 5%, #000 25%, #000 75%, transparent); mask-image: linear-gradient(transparent 5%, #000 25%, #000 75%, transparent); pointer-events: none; }
```
